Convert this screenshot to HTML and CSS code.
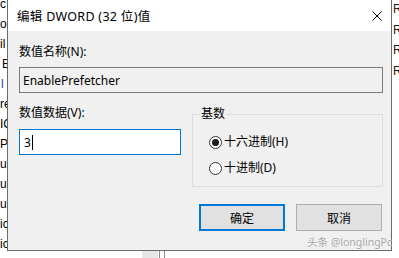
FILE: index.html
```html
<!DOCTYPE html>
<html lang="zh-CN">
<head>
  <meta charset="UTF-8" />
  <meta name="viewport" content="width=device-width, initial-scale=1.0" />
  <title>编辑 DWORD (32 位)值</title>
  <link rel="stylesheet" href="styles.css">
</head>
<body>
  <div class="desktop">
    <div class="names">
      <span>c</span>
      <span>o</span>
      <span>il</span>
      <span class="shift">B</span>
      <span class="selected">l</span>
      <span>re</span>
      <span>IC</span>
      <span>Po</span>
      <span>ur</span>
      <span>ur</span>
      <span>ur</span>
      <span>ic</span>
      <span>ic</span>
    </div>
    <div class="middle">
      <div class="floor">
        <span class="cell"></span>
        <span class="rule"></span>
        <span class="rule far"></span>
      </div>
    </div>
    <div class="types">
      <span>R</span>
      <span>R</span>
      <span>R</span>
      <span>R</span>
    </div>
  </div>

  <div class="dialog">
    <div class="titlebar">
      <span class="title">编辑 DWORD (32 位)值</span>
      <svg class="close" width="10" height="10" viewBox="0 0 10 10">
        <path d="M0.5 0.5 L9.5 9.5 M9.5 0.5 L0.5 9.5" stroke="#000" stroke-width="1" fill="none" />
      </svg>
    </div>

    <div class="content">
      <div class="label">数值名称(N):</div>
      <div class="field readonly">EnablePrefetcher</div>

      <div class="row">
        <div class="col">
          <div class="label">数值数据(V):</div>
          <div class="field active">3<span class="caret"></span></div>
        </div>
        <fieldset class="base">
          <legend>基数</legend>
          <div class="option"><span class="radio checked"></span>十六进制(H)</div>
          <div class="option"><span class="radio"></span>十进制(D)</div>
        </fieldset>
      </div>

      <div class="buttons">
        <button class="btn primary">确定</button>
        <button class="btn">取消</button>
      </div>
    </div>
  </div>

  <div class="watermark">头条 @longlingPc</div>
</body>
</html>
```

FILE: styles.css
```css
body {
  margin: 0;
  width: 399px;
  height: 258px;
  overflow: hidden;
  position: relative;
  background-color: #fff;
  font-family: "Noto Sans", "Noto Sans CJK SC", sans-serif;
  font-size: 12px;
  color: #000;
}

/* registry editor behind the dialog */
.desktop {
  display: grid;
  grid-template-columns: 7px 1fr 7px;
  height: 258px;
  font-family: "Liberation Sans", sans-serif;
  font-size: 12px;
}

.names {
  display: flex;
  flex-direction: column;
  margin-top: -6px;
  line-height: 20px;
  white-space: nowrap;
  overflow: hidden;
}

.names .shift {
  padding-left: 2px;
}

.names .selected {
  color: #0a4fb4;
  padding-left: 1px;
}

.middle {
  display: flex;
  align-items: flex-end;
  padding-left: 135px;
}

.floor {
  display: flex;
  height: 7px;
}

.floor .cell {
  width: 16px;
  background-color: #e6e6e6;
}

.floor .rule {
  width: 1px;
  margin-left: 1px;
  background-color: #8a8a8a;
}

.floor .far {
  margin-left: 4px;
}

.types {
  display: flex;
  flex-direction: column;
  margin-top: -1px;
  padding-left: 1px;
  line-height: 20.5px;
  color: #1a1a1a;
  overflow: hidden;
}

/* dialog */
.dialog {
  position: absolute;
  left: 7px;
  top: -1px;
  width: 385px;
  height: 252px;
  box-sizing: border-box;
  border: 1px solid #6b6b6b;
  background-color: #f0f0f0;
  display: flex;
  flex-direction: column;
}

.titlebar {
  flex-shrink: 0;
  height: 31px;
  background-color: #fff;
  display: flex;
  align-items: center;
  justify-content: space-between;
  padding: 0 9px 0 9px;
}

.title {
  font-size: 12.5px;
  letter-spacing: 0.3px;
}

.content {
  padding: 0 8px 0 11px;
}

.label {
  line-height: 16px;
  margin-top: 13px;
}

.field {
  height: 26px;
  box-sizing: border-box;
  margin-top: 7px;
  padding-left: 3px;
  display: flex;
  align-items: center;
  border: 1px solid #7a7a7a;
}

.field.active {
  margin-top: 8px;
  padding-left: 4px;
  border-color: #0078d7;
  background-color: #fff;
}

.caret {
  width: 1px;
  height: 15px;
  margin-left: 1px;
  background-color: #000;
}

.row {
  display: grid;
  grid-template-columns: 162px 1fr;
  column-gap: 11px;
  margin-top: 12px;
}

.row .label {
  margin-top: 0;
}

.base {
  margin: 0;
  padding: 0 7px 10px;
  border: 1px solid #dcdcdc;
  min-inline-size: 0;
}

.base legend {
  padding: 0 1px;
  line-height: 18px;
}

.option {
  display: flex;
  align-items: center;
  gap: 2px;
  line-height: 16px;
  margin-top: 10px;
  padding-left: 9px;
}

.option:first-of-type {
  margin-top: 11px;
}

.radio {
  width: 13px;
  height: 13px;
  box-sizing: border-box;
  border: 1px solid #333;
  border-radius: 50%;
  background-color: #fff;
  display: flex;
  align-items: center;
  justify-content: center;
}

.radio.checked::after {
  content: "";
  width: 7px;
  height: 7px;
  border-radius: 50%;
  background-color: #1a1a1a;
}

.buttons {
  display: flex;
  justify-content: flex-end;
  gap: 11px;
  margin-top: 17px;
  padding-right: 1px;
}

.btn {
  width: 86px;
  height: 27px;
  padding: 0;
  border: 1px solid #adadad;
  background-color: #e1e1e1;
  font: inherit;
  color: #000;
}

.btn.primary {
  border: 2px solid #0078d7;
}

.watermark {
  position: absolute;
  right: 7px;
  bottom: 9px;
  font-size: 10.5px;
  line-height: 13px;
  color: #a6a6a6;
  text-shadow: 0 0 2px #fff;
}
```
